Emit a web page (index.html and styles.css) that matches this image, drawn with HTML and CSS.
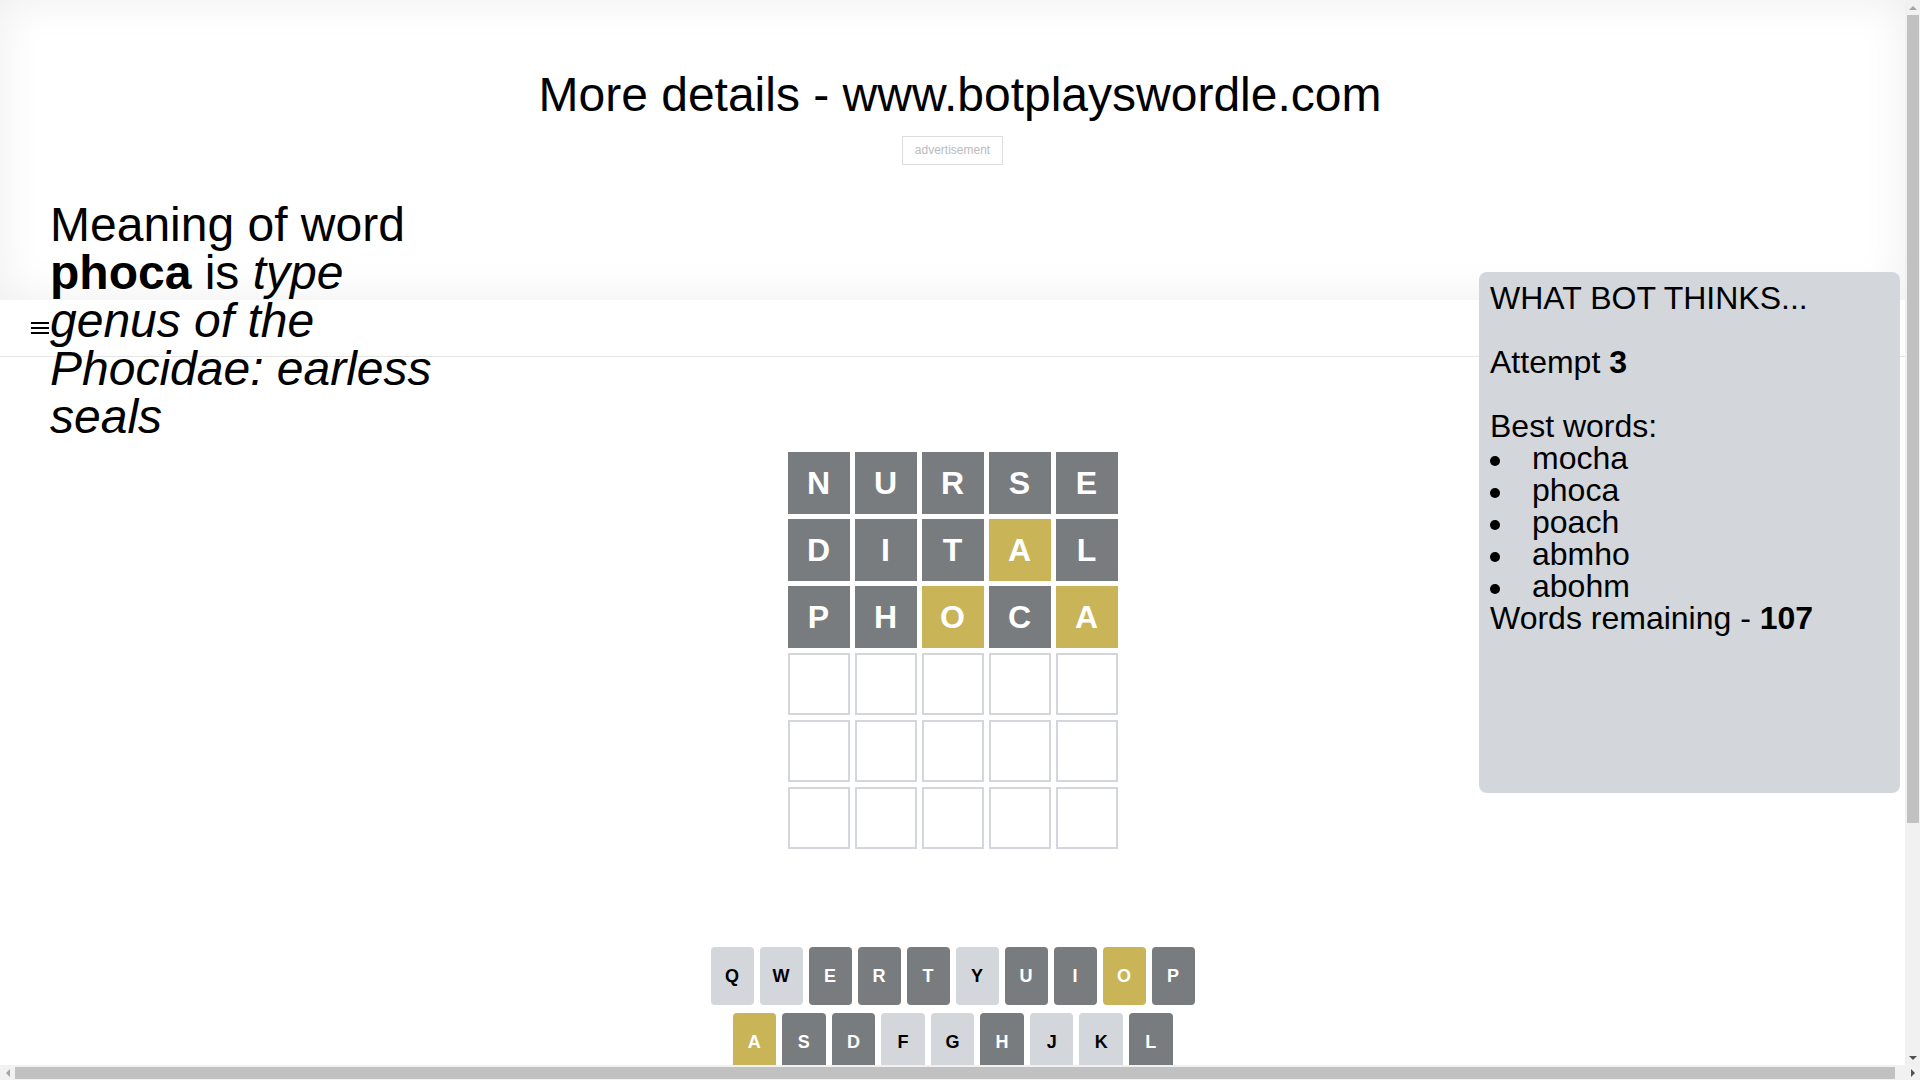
FILE: index.html
```html
<!DOCTYPE html>
<html lang="en">
<head>
    <meta charset="UTF-8">
    <title>Bot plays Wordle</title>
    <link rel="stylesheet" href="styles.css">
</head>
<body>

<div class="page">

    <!-- top banner with ad slot -->
    <div class="banner">
        <h1 class="siteLink">More details - www.botplayswordle.com</h1>
        <div class="adSlot">advertisement</div>
    </div>

    <!-- nav bar -->
    <div class="navBar">
        <button class="menuBtn" aria-label="menu">
            <span></span><span></span><span></span>
        </button>
    </div>

    <!-- meaning of the solved word, sits over the banner -->
    <div class="meaning">
        Meaning of word <b>phoca</b> is <i>type genus of the Phocidae: earless seals</i>
    </div>

    <!-- what the bot is thinking -->
    <div class="botPanel">
        WHAT BOT THINKS...<br><br>
        Attempt <b>3</b><br><br>
        Best words:
        <ul class="bestWords">
            <li>mocha</li>
            <li>phoca</li>
            <li>poach</li>
            <li>abmho</li>
            <li>abohm</li>
        </ul>
        Words remaining - <b>107</b>
    </div>

    <!-- game board -->
    <div class="board">
        <div class="tile absent">N</div>
        <div class="tile absent">U</div>
        <div class="tile absent">R</div>
        <div class="tile absent">S</div>
        <div class="tile absent">E</div>

        <div class="tile absent">D</div>
        <div class="tile absent">I</div>
        <div class="tile absent">T</div>
        <div class="tile present">A</div>
        <div class="tile absent">L</div>

        <div class="tile absent">P</div>
        <div class="tile absent">H</div>
        <div class="tile present">O</div>
        <div class="tile absent">C</div>
        <div class="tile present">A</div>

        <div class="tile"></div><div class="tile"></div><div class="tile"></div><div class="tile"></div><div class="tile"></div>
        <div class="tile"></div><div class="tile"></div><div class="tile"></div><div class="tile"></div><div class="tile"></div>
        <div class="tile"></div><div class="tile"></div><div class="tile"></div><div class="tile"></div><div class="tile"></div>
    </div>

    <!-- keyboard -->
    <div class="keyboard">
        <div class="keyRow">
            <button class="key">q</button>
            <button class="key">w</button>
            <button class="key absent">e</button>
            <button class="key absent">r</button>
            <button class="key absent">t</button>
            <button class="key">y</button>
            <button class="key absent">u</button>
            <button class="key absent">i</button>
            <button class="key present">o</button>
            <button class="key absent">p</button>
        </div>
        <div class="keyRow middle">
            <button class="key present">a</button>
            <button class="key absent">s</button>
            <button class="key absent">d</button>
            <button class="key">f</button>
            <button class="key">g</button>
            <button class="key absent">h</button>
            <button class="key">j</button>
            <button class="key">k</button>
            <button class="key absent">l</button>
        </div>
        <div class="keyRow">
            <button class="key wide">enter</button>
            <button class="key">z</button>
            <button class="key">x</button>
            <button class="key absent">c</button>
            <button class="key">v</button>
            <button class="key">b</button>
            <button class="key absent">n</button>
            <button class="key">m</button>
            <button class="key wide">&#9003;</button>
        </div>
    </div>

</div>

<!-- classic window scrollbars -->
<div class="scrollbar vertical">
    <span class="arrow up"></span>
    <span class="thumb"></span>
    <span class="arrow down"></span>
</div>
<div class="scrollbar horizontal">
    <span class="arrow left"></span>
    <span class="thumb"></span>
    <span class="arrow right"></span>
</div>

</body>
</html>
```

FILE: styles.css
```css
body {
    margin: 0;
    overflow: hidden;
    font-family: "Liberation Sans", Arial, sans-serif;
    color: #000;
    background: #fff;
}

.page {
    position: relative;
    margin-right: 15px;
}

/* banner */
.banner {
    height: 300px;
    padding-top: 67px;
    box-sizing: border-box;
    text-align: center;
    box-shadow: inset 0 0 45px rgba(0, 0, 0, 0.07);
}

.siteLink {
    margin: 0;
    padding-left: 15px;
    font-size: 48px;
    font-weight: normal;
    line-height: normal;
}

.adSlot {
    display: inline-block;
    margin-top: 14px;
    padding: 6px 12px;
    border: 1px solid #ddd;
    font-size: 12px;
    line-height: 15px;
    color: #bbb;
}

/* nav */
.navBar {
    height: 56px;
    display: flex;
    align-items: center;
    padding-left: 31px;
    border-bottom: 1px solid #e6e6e6;
}

.menuBtn {
    display: flex;
    flex-direction: column;
    gap: 3px;
    width: 18px;
    padding: 0;
    border: 0;
    background: none;
    cursor: pointer;
}

.menuBtn > span {
    height: 2px;
    background: #000;
}

/* side panels */
.meaning {
    position: absolute;
    top: 201px;
    left: 50px;
    width: 400px;
    font-size: 48px;
    line-height: 48px;
}

.botPanel {
    position: absolute;
    top: 272px;
    right: 5px;
    width: 421px;
    height: 521px;
    box-sizing: border-box;
    padding: 10px 11px;
    border-radius: 8px;
    background: #d3d6da;
    font-size: 32px;
    line-height: 32px;
}

.bestWords {
    margin: 0;
    padding: 0;
    list-style: none;
}

.bestWords > li {
    position: relative;
    padding-left: 42px;
}

.bestWords > li::before {
    content: "";
    position: absolute;
    left: 0;
    top: 14px;
    width: 10px;
    height: 10px;
    border-radius: 50%;
    background: #000;
}

/* board */
.board {
    display: grid;
    grid-template-columns: repeat(5, 62px);
    grid-auto-rows: 62px;
    gap: 5px;
    justify-content: center;
    padding-top: 95px;
}

.tile {
    display: flex;
    align-items: center;
    justify-content: center;
    box-sizing: border-box;
    border: 2px solid #d3d6da;
    font-size: 32px;
    font-weight: bold;
    line-height: 1;
    color: #fff;
    text-transform: uppercase;
}

.tile.absent {
    background: #787c7e;
    border-color: #787c7e;
}

.tile.present {
    background: #c9b458;
    border-color: #c9b458;
}

/* keyboard */
.keyboard {
    width: 484px;
    margin: 98px auto 0;
    padding-bottom: 220px;
}

.keyRow {
    display: flex;
    gap: 6px;
    margin-bottom: 8px;
}

.keyRow.middle {
    padding: 0 22px;
}

.key {
    flex: 1;
    height: 58px;
    padding: 0;
    border: 0;
    border-radius: 4px;
    background: #d3d6da;
    color: #000;
    font-family: inherit;
    font-size: 18px;
    font-weight: bold;
    text-transform: uppercase;
    cursor: pointer;
}

.key.wide {
    flex: 1.5;
    font-size: 12px;
}

.key.absent {
    background: #787c7e;
    color: #fff;
}

.key.present {
    background: #c9b458;
    color: #fff;
}

/* scrollbars */
.scrollbar {
    position: fixed;
    display: flex;
    background: #f1f1f1;
}

.scrollbar.vertical {
    top: 0;
    right: 0;
    width: 15px;
    height: calc(100% - 15px);
    flex-direction: column;
}

.scrollbar.horizontal {
    left: 0;
    bottom: 0;
    width: 100%;
    height: 15px;
}

.scrollbar .thumb {
    background: #c1c1c1;
}

.scrollbar.vertical .thumb {
    height: 808px;
    margin: 0 1px auto 2px;
}

.scrollbar.horizontal .thumb {
    flex: 1;
    margin: 2px 10px 1px 0;
}

.arrow {
    flex: none;
    width: 15px;
    height: 15px;
    display: flex;
    align-items: center;
    justify-content: center;
}

.arrow::before {
    content: "";
    border: 4px solid transparent;
}

.arrow.up::before {
    border-top: 0;
    border-bottom-color: #a3a3a3;
}

.arrow.down::before {
    border-bottom: 0;
    border-top-color: #505050;
}

.arrow.left::before {
    border-left: 0;
    border-right-color: #a3a3a3;
}

.arrow.right::before {
    border-right: 0;
    border-left-color: #505050;
}
```
